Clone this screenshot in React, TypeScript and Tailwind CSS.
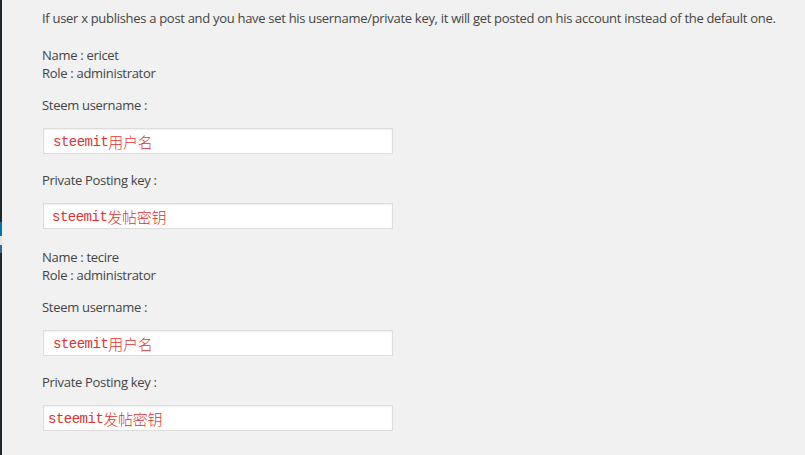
import React from "react";

interface Account {
  name: string;
  role: string;
  userPad: string;
  keyPad: string;
}

const accounts: Account[] = [
  { name: "ericet", role: "administrator", userPad: "pl-[9px]", keyPad: "pl-[8px]" },
  { name: "tecire", role: "administrator", userPad: "pl-[9px]", keyPad: "pl-[4px]" },
];

function FakeInput({ pad, latin, cjk }: { pad: string; latin: string; cjk: string }) {
  return (
    <div
      className={`ml-[1px] flex h-[26px] w-[350px] items-end border border-[#dddddd] bg-white pb-[1px] shadow-[inset_0_1px_2px_rgba(0,0,0,0.07)] ${pad}`}
    >
      <span className="font-['Liberation_Mono',monospace] text-[14px] leading-[20px] tracking-[-0.5px] text-[#dc3232]">
        {latin}
      </span>
      <span className="font-['Noto_Sans_CJK_SC',sans-serif] text-[15px] font-light leading-[20px] text-[#dc3232]">{cjk}</span>
    </div>
  );
}

function AccountBlock({ account }: { account: Account }) {
  return (
    <div className="mt-[19px]">
      <p>Name : {account.name}</p>
      <p>Role : {account.role}</p>
      <p className="mt-[14px]">Steem username :</p>
      <div className="mt-[14px]">
        <FakeInput pad={account.userPad} latin="steemit" cjk="用户名" />
      </div>
      <p className="mt-[17px]">Private Posting key :</p>
      <div className="mt-[14px]">
        <FakeInput pad={account.keyPad} latin="steemit" cjk="发帖密钥" />
      </div>
    </div>
  );
}

export default function App() {
  return (
    <div className="flex h-[455px] w-full overflow-hidden bg-[#f1f1f1]">
      <div className="flex w-[2px] flex-col">
        <div className="h-[222px] bg-[#23282d]" />
        <div className="h-[14px] bg-[#0073aa]" />
        <div className="h-[9px] bg-[#e5e5e5]" />
        <div className="h-[8px] bg-[#2f6d98]" />
        <div className="flex-1 bg-[#23282d]" />
      </div>
      <div className="pl-[40px] pt-[9px] font-['Open_Sans',sans-serif] text-[13px] leading-[18px] tracking-[-0.3px] text-[#444444]">
        <p>
          If user x publishes a post and you have set his username/private key, it will get posted on his account instead of the default one.
        </p>
        {accounts.map((a) => (
          <AccountBlock key={a.name} account={a} />
        ))}
      </div>
    </div>
  );
}
